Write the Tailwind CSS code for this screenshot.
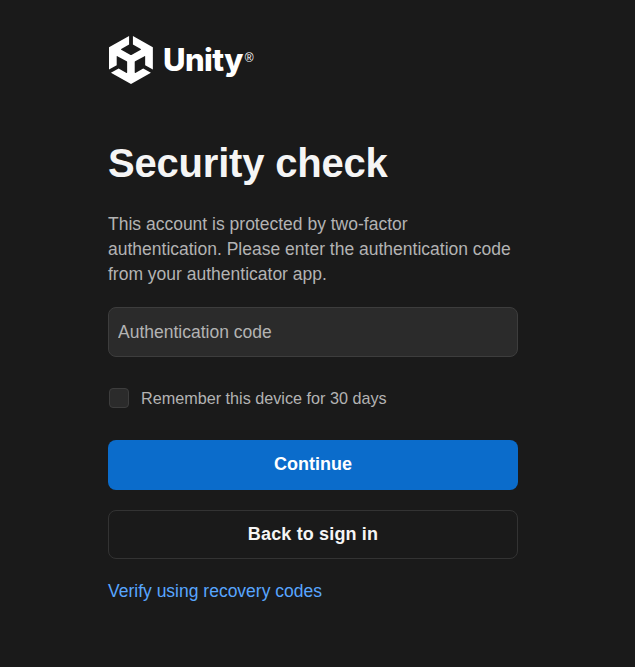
<!DOCTYPE html>
<html lang="en">
<head>
    <meta charset="UTF-8">
    <meta name="viewport" content="width=device-width, initial-scale=1.0">
    <title>Security check</title>
    <script src="https://cdn.jsdelivr.net/npm/@tailwindcss/browser@4"></script>
</head>
<body class="min-h-screen bg-[#1a1a1a] font-['Liberation_Sans',Arial,sans-serif]">
    <main class="ml-[108px] w-[410px] pt-9">
        <!-- Logo -->
        <div class="flex items-center h-12">
            <svg class="w-[44px] h-12 ml-px" viewBox="1.3758 0 21.2484 24" preserveAspectRatio="none" fill="#fff">
                <path d="m12.9288 4.2939 3.7997 2.1929c.1366.077.1415.2905 0 .3675l-4.515 2.6076a.4192.4192 0 0 1-.4246 0L7.274 6.8543c-.139-.0745-.1415-.293 0-.3675l3.7972-2.193V0L1.3758 5.5977V16.793l3.7177-2.1456v-4.3858c-.0025-.1565.1813-.2682.318-.1838l4.5148 2.6076a.4252.4252 0 0 1 .2136.3676v5.2127c.0025.1565-.1813.2682-.3179.1838l-3.7996-2.1929-3.7178 2.1457L12 24l9.6269-5.5977-3.7177-2.1457-3.7997 2.1929c-.1341.082-.3229-.0248-.3179-.1838V13.0542c0-.1565.0894-.2956.2136-.3676l4.5149-2.6076c.134-.082.3203.0248.3178.1838v4.3858l3.7178 2.1456V5.5977L12.9288 0Z"/>
            </svg>
            <span class="ml-[10px] text-[31px] font-extrabold text-white font-['Inter',sans-serif] tracking-[-0.6px]">Unity</span>
            <span class="ml-[2px] mb-1 text-xs text-white">®</span>
        </div>

        <h1 class="mt-[55px] text-[40px] leading-[48px] font-bold text-[#f5f5f5] tracking-[-0.2px]">Security check</h1>

        <p class="mt-[25px] text-[17.5px] leading-[25px] text-[#b3b3b3]">This account is protected by two-factor authentication. Please enter the authentication code from your authenticator app.</p>

        <input type="text" placeholder="Authentication code" class="mt-5 block w-full h-[50px] px-[9px] rounded-lg bg-[#2b2b2b] border border-[#3d3d3d] text-[17.5px] placeholder:text-[#b3b3b3] outline-none">

        <label class="mt-[31px] flex items-center h-5">
            <span class="ml-px w-5 h-5 rounded bg-[#2b2b2b] border border-[#3d3d3d]"></span>
            <span class="ml-3 text-[16.2px] text-[#b3b3b3]">Remember this device for 30 days</span>
        </label>

        <button class="mt-8 block w-full h-[50px] pb-0.5 rounded-lg bg-[#0b6ccb] text-lg font-bold text-white">Continue</button>
        <button class="mt-5 block w-full h-[49px] pb-0.5 rounded-lg border border-[#333333] text-lg font-bold text-[#f5f5f5] tracking-[0.15px]">Back to sign in</button>

        <a href="#" class="mt-5 block text-[17.5px] leading-[25px] text-[#58a6ff]">Verify using recovery codes</a>
    </main>
</body>
</html>
